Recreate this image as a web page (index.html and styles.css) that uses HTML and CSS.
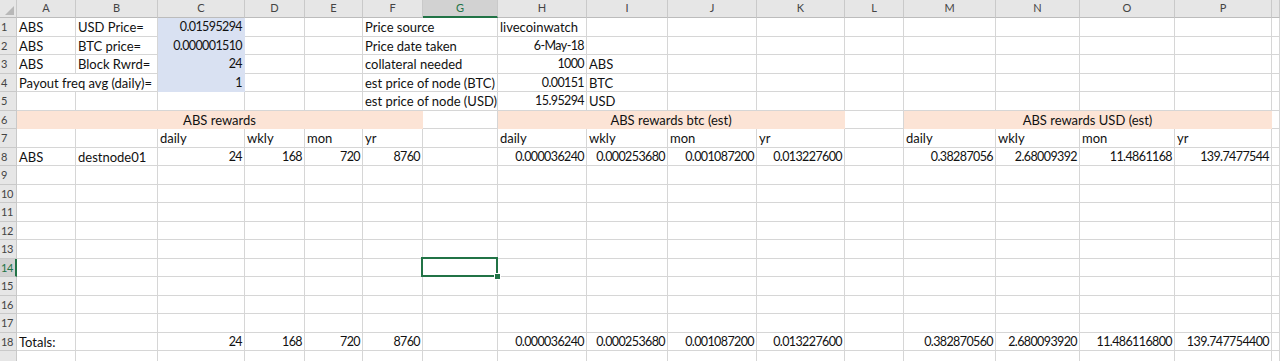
FILE: index.html
```html
<!DOCTYPE html>
<html lang="en">
<head>
<meta charset="utf-8">
<title>ABS rewards sheet</title>
<link rel="stylesheet" href="styles.css">
</head>
<body>
<div class="sheet">
  <div class="row hdr">
    <div class="corner"></div>
    <div class="ch">A</div><div class="ch">B</div><div class="ch">C</div><div class="ch">D</div><div class="ch">E</div><div class="ch">F</div><div class="ch sel">G</div><div class="ch">H</div><div class="ch">I</div><div class="ch">J</div><div class="ch">K</div><div class="ch">L</div><div class="ch">M</div><div class="ch">N</div><div class="ch">O</div><div class="ch">P</div><div class="ch"></div>
  </div>

  <div class="row">
    <div class="rh">1</div>
    <div class="c">ABS</div><div class="c">USD Price=</div><div class="c n blue">0.01595294</div><div class="c"></div><div class="c"></div><div class="c s2">Price source</div><div class="c">livecoinwatch</div><div class="c"></div><div class="c"></div><div class="c"></div><div class="c"></div><div class="c"></div><div class="c"></div><div class="c"></div><div class="c"></div><div class="c"></div>
  </div>
  <div class="row">
    <div class="rh">2</div>
    <div class="c">ABS</div><div class="c">BTC price=</div><div class="c n blue">0.000001510</div><div class="c"></div><div class="c"></div><div class="c s2">Price date taken</div><div class="c n">6-May-18</div><div class="c"></div><div class="c"></div><div class="c"></div><div class="c"></div><div class="c"></div><div class="c"></div><div class="c"></div><div class="c"></div><div class="c"></div>
  </div>
  <div class="row">
    <div class="rh">3</div>
    <div class="c">ABS</div><div class="c">Block Rwrd=</div><div class="c n blue">24</div><div class="c"></div><div class="c"></div><div class="c s2">collateral needed</div><div class="c n">1000</div><div class="c">ABS</div><div class="c"></div><div class="c"></div><div class="c"></div><div class="c"></div><div class="c"></div><div class="c"></div><div class="c"></div><div class="c"></div>
  </div>
  <div class="row">
    <div class="rh">4</div>
    <div class="c s2">Payout freq avg (daily)=</div><div class="c n blue">1</div><div class="c"></div><div class="c"></div><div class="c s2">est price of node (BTC)</div><div class="c n">0.00151</div><div class="c">BTC</div><div class="c"></div><div class="c"></div><div class="c"></div><div class="c"></div><div class="c"></div><div class="c"></div><div class="c"></div><div class="c"></div>
  </div>
  <div class="row">
    <div class="rh">5</div>
    <div class="c"></div><div class="c"></div><div class="c"></div><div class="c"></div><div class="c"></div><div class="c s2">est price of node (USD)</div><div class="c n">15.95294</div><div class="c">USD</div><div class="c"></div><div class="c"></div><div class="c"></div><div class="c"></div><div class="c"></div><div class="c"></div><div class="c"></div><div class="c"></div>
  </div>
  <div class="row">
    <div class="rh">6</div>
    <div class="c pink s6">ABS rewards</div><div class="c"></div><div class="c pink s4">ABS rewards btc (est)</div><div class="c"></div><div class="c pink s4">ABS rewards USD (est)</div><div class="c"></div>
  </div>
  <div class="row">
    <div class="rh">7</div>
    <div class="c"></div><div class="c"></div><div class="c">daily</div><div class="c">wkly</div><div class="c">mon</div><div class="c">yr</div><div class="c"></div><div class="c">daily</div><div class="c">wkly</div><div class="c">mon</div><div class="c">yr</div><div class="c"></div><div class="c">daily</div><div class="c">wkly</div><div class="c">mon</div><div class="c">yr</div><div class="c"></div>
  </div>
  <div class="row">
    <div class="rh">8</div>
    <div class="c">ABS</div><div class="c">destnode01</div><div class="c n">24</div><div class="c n">168</div><div class="c n">720</div><div class="c n">8760</div><div class="c"></div><div class="c n">0.000036240</div><div class="c n">0.000253680</div><div class="c n">0.001087200</div><div class="c n">0.013227600</div><div class="c"></div><div class="c n">0.38287056</div><div class="c n">2.68009392</div><div class="c n">11.4861168</div><div class="c n">139.7477544</div><div class="c"></div>
  </div>
  <div class="row"><div class="rh">9</div><div class="c"></div><div class="c"></div><div class="c"></div><div class="c"></div><div class="c"></div><div class="c"></div><div class="c"></div><div class="c"></div><div class="c"></div><div class="c"></div><div class="c"></div><div class="c"></div><div class="c"></div><div class="c"></div><div class="c"></div><div class="c"></div><div class="c"></div></div>
  <div class="row"><div class="rh">10</div><div class="c"></div><div class="c"></div><div class="c"></div><div class="c"></div><div class="c"></div><div class="c"></div><div class="c"></div><div class="c"></div><div class="c"></div><div class="c"></div><div class="c"></div><div class="c"></div><div class="c"></div><div class="c"></div><div class="c"></div><div class="c"></div><div class="c"></div></div>
  <div class="row"><div class="rh">11</div><div class="c"></div><div class="c"></div><div class="c"></div><div class="c"></div><div class="c"></div><div class="c"></div><div class="c"></div><div class="c"></div><div class="c"></div><div class="c"></div><div class="c"></div><div class="c"></div><div class="c"></div><div class="c"></div><div class="c"></div><div class="c"></div><div class="c"></div></div>
  <div class="row"><div class="rh">12</div><div class="c"></div><div class="c"></div><div class="c"></div><div class="c"></div><div class="c"></div><div class="c"></div><div class="c"></div><div class="c"></div><div class="c"></div><div class="c"></div><div class="c"></div><div class="c"></div><div class="c"></div><div class="c"></div><div class="c"></div><div class="c"></div><div class="c"></div></div>
  <div class="row"><div class="rh">13</div><div class="c"></div><div class="c"></div><div class="c"></div><div class="c"></div><div class="c"></div><div class="c"></div><div class="c"></div><div class="c"></div><div class="c"></div><div class="c"></div><div class="c"></div><div class="c"></div><div class="c"></div><div class="c"></div><div class="c"></div><div class="c"></div><div class="c"></div></div>
  <div class="row"><div class="rh sel">14</div><div class="c"></div><div class="c"></div><div class="c"></div><div class="c"></div><div class="c"></div><div class="c"></div><div class="c active"></div><div class="c"></div><div class="c"></div><div class="c"></div><div class="c"></div><div class="c"></div><div class="c"></div><div class="c"></div><div class="c"></div><div class="c"></div><div class="c"></div></div>
  <div class="row"><div class="rh">15</div><div class="c"></div><div class="c"></div><div class="c"></div><div class="c"></div><div class="c"></div><div class="c"></div><div class="c"></div><div class="c"></div><div class="c"></div><div class="c"></div><div class="c"></div><div class="c"></div><div class="c"></div><div class="c"></div><div class="c"></div><div class="c"></div><div class="c"></div></div>
  <div class="row"><div class="rh">16</div><div class="c"></div><div class="c"></div><div class="c"></div><div class="c"></div><div class="c"></div><div class="c"></div><div class="c"></div><div class="c"></div><div class="c"></div><div class="c"></div><div class="c"></div><div class="c"></div><div class="c"></div><div class="c"></div><div class="c"></div><div class="c"></div><div class="c"></div></div>
  <div class="row"><div class="rh">17</div><div class="c"></div><div class="c"></div><div class="c"></div><div class="c"></div><div class="c"></div><div class="c"></div><div class="c"></div><div class="c"></div><div class="c"></div><div class="c"></div><div class="c"></div><div class="c"></div><div class="c"></div><div class="c"></div><div class="c"></div><div class="c"></div><div class="c"></div></div>
  <div class="row">
    <div class="rh">18</div>
    <div class="c">Totals:</div><div class="c"></div><div class="c n">24</div><div class="c n">168</div><div class="c n">720</div><div class="c n">8760</div><div class="c"></div><div class="c n">0.000036240</div><div class="c n">0.000253680</div><div class="c n">0.001087200</div><div class="c n">0.013227600</div><div class="c"></div><div class="c n">0.382870560</div><div class="c n">2.680093920</div><div class="c n">11.486116800</div><div class="c n">139.747754400</div><div class="c"></div>
  </div>
  <div class="row last"><div class="rh"></div><div class="c"></div><div class="c"></div><div class="c"></div><div class="c"></div><div class="c"></div><div class="c"></div><div class="c"></div><div class="c"></div><div class="c"></div><div class="c"></div><div class="c"></div><div class="c"></div><div class="c"></div><div class="c"></div><div class="c"></div><div class="c"></div><div class="c"></div></div>
</div>
</body>
</html>
```

FILE: styles.css
```css
html, body {
  margin: 0;
  padding: 0;
  background: #ffffff;
  overflow: hidden;
}

.sheet {
  width: 1280px;
  height: 361px;
  overflow: hidden;
  font-family: Lato, "Liberation Sans", sans-serif;
  font-size: 13px;
  color: #111;
}

.row {
  display: grid;
  grid-template-columns: 17px 59px 82px 87px 60px 58px 60px 75px 89px 81px 89px 88px 59px 92px 84px 95px 97px 1fr;
  height: 18.5px;
}

.row.hdr {
  height: 18px;
}

.corner,
.ch,
.rh {
  box-sizing: border-box;
  background: #e6e6e6;
  color: #444;
  font-size: 11px;
  border-right: 1px solid #c9c9c9;
  border-bottom: 1px solid #bcbcbc;
}

.corner {
  position: relative;
}

.corner::after {
  content: "";
  position: absolute;
  right: 2px;
  bottom: 2px;
  width: 9px;
  height: 9px;
  background: #b8b8b8;
  clip-path: polygon(100% 0, 100% 100%, 0 100%);
}

.ch {
  text-align: center;
  line-height: 16px;
}

.ch.sel {
  background: #d2d2d2;
  color: #217346;
  border-bottom: 2px solid #217346;
}

.rh {
  padding-left: 1px;
  line-height: 18px;
  border-bottom-color: #c9c9c9;
  overflow: hidden;
  white-space: nowrap;
  letter-spacing: -0.3px;
}

.rh.sel {
  background: #d2d2d2;
  color: #217346;
  border-right: 2px solid #217346;
}

.c {
  box-sizing: border-box;
  border-right: 1px solid #d6d6d6;
  border-bottom: 1px solid #d6d6d6;
  padding: 0 2px;
  line-height: 18px;
  white-space: nowrap;
  overflow: hidden;
}

.n {
  text-align: right;
  font-size: 12.5px;
  letter-spacing: -0.6px;
}

.s2 { grid-column: span 2; }
.s4 { grid-column: span 4; }
.s6 { grid-column: span 6; }

.blue {
  background: #d9e1f2;
  border-right-color: #d9e1f2;
  border-bottom-color: #d9e1f2;
}

.pink {
  background: #fce4d6;
  border-right-color: #fce4d6;
  border-bottom-color: #fce4d6;
  text-align: center;
}

.active {
  position: relative;
  overflow: visible;
}

.active::after {
  content: "";
  position: absolute;
  left: -2px;
  top: -2px;
  right: -1px;
  bottom: -1px;
  border: 2px solid #217346;
  z-index: 2;
}

.active::before {
  content: "";
  position: absolute;
  right: -4px;
  bottom: -4px;
  width: 5px;
  height: 5px;
  background: #217346;
  border: 1px solid #fff;
  z-index: 3;
}
```
